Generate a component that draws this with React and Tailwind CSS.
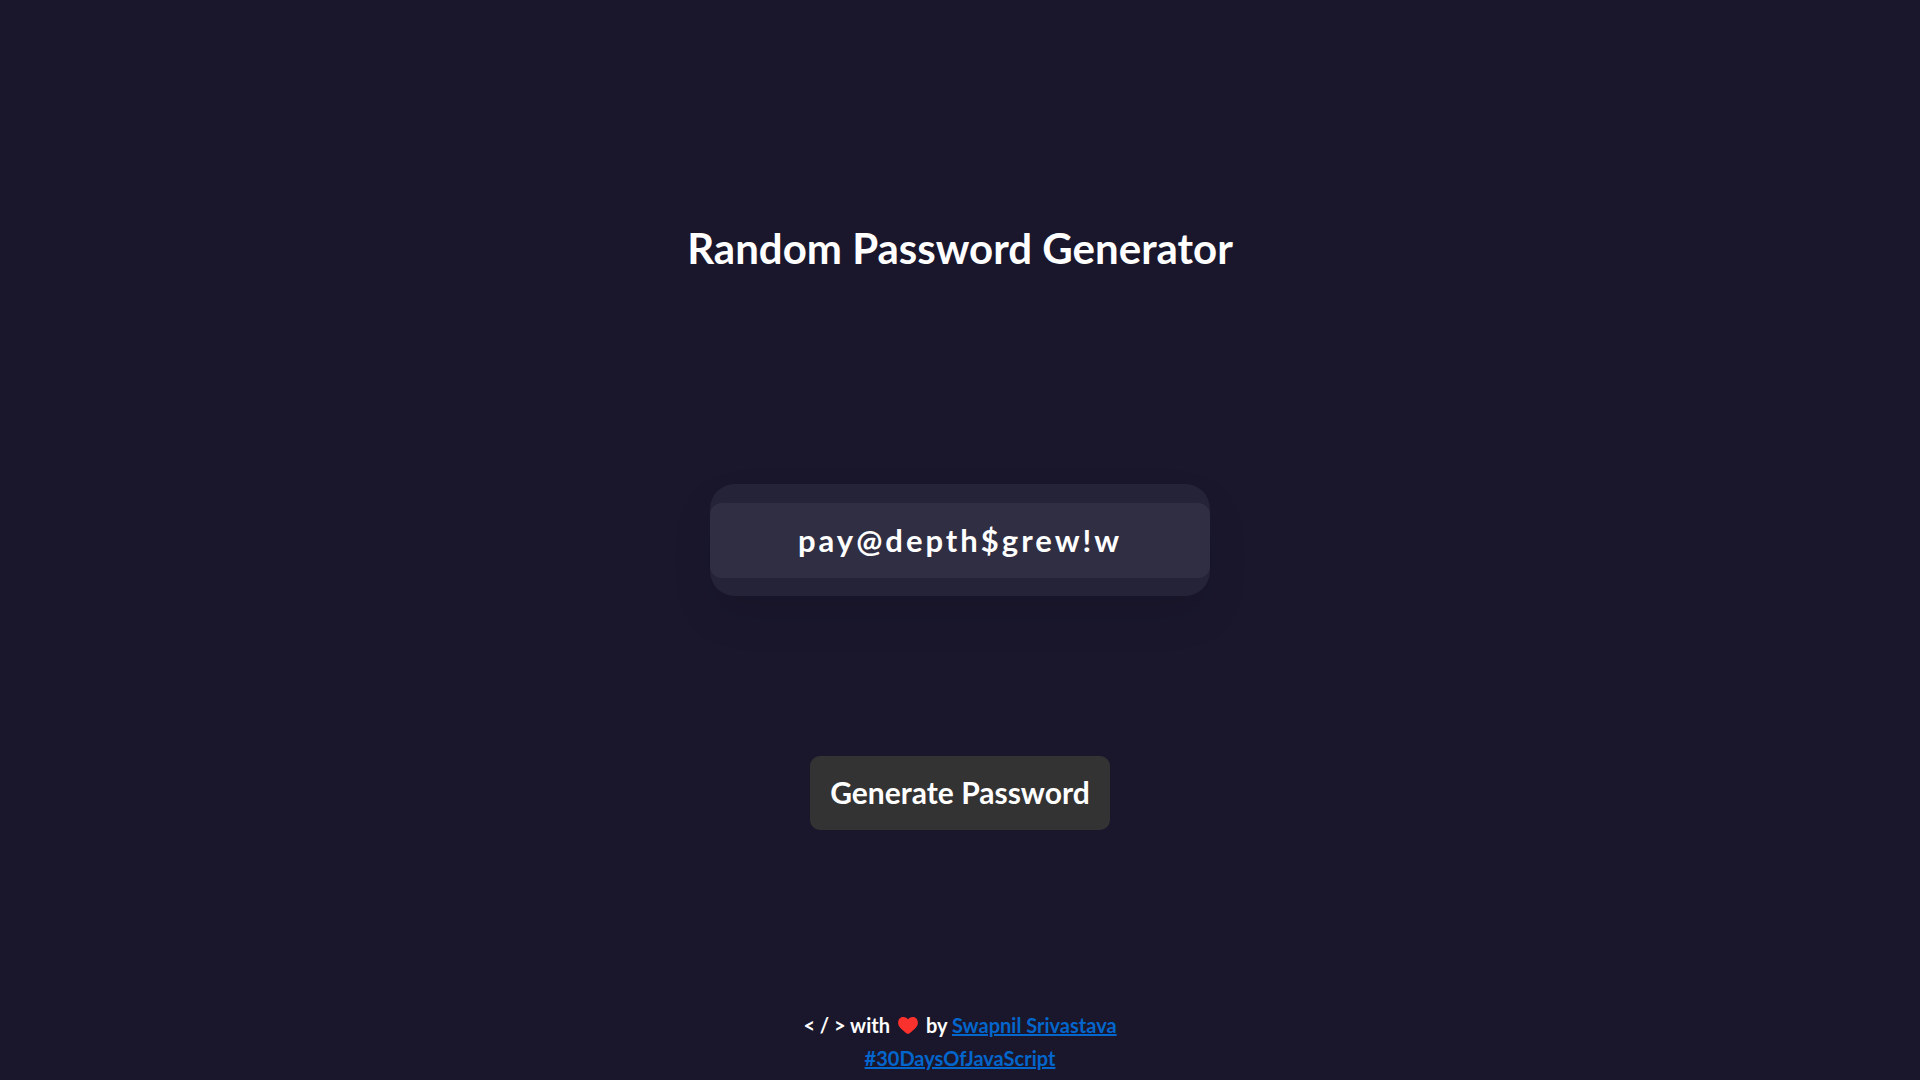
import { useState } from "react";

const words = ["depth", "grew", "pay", "lamp", "river", "stone", "cloud", "maple"];
const symbols = ["@", "$", "!", "#", "&"];
const pick = (list) => list[Math.floor(Math.random() * list.length)];

function createPassword() {
  return (pick(words) + pick(symbols) + pick(words) + pick(symbols) + pick(words)).slice(0, 16);
}

function Heart() {
  return (
    <svg viewBox="0 0 20 17" className="mx-2 h-[17px] w-5" role="img" aria-label="love">
      <path
        fill="#fa312d"
        d="M10 17C9.300 17 1.900 11.400.5 7.900-.7 4.200 1.200.1 5.100.1 7.600.1 9.200 1.300 10 2.600 10.800 1.300 12.400.1 14.900.1 18.800.1 20.700 4.200 19.500 7.900 18.100 11.400 10.700 17 10 17Z"
      />
    </svg>
  );
}

export default function App() {
  const [password, setPassword] = useState("pay@depth$grew!w");

  return (
    <div className="flex min-h-screen flex-col items-center bg-[#1a172d] font-['Lato',sans-serif] font-bold text-white">
      <main className="flex w-full flex-1 flex-col items-center px-4 pt-[216px]">
        <h1 className="text-center text-[42px] leading-[64px] font-bold">Random Password Generator</h1>
        <div className="mt-[204px] w-full max-w-[500px] rounded-[25px] bg-white/5 pt-[19px] pb-[18px] shadow-[0_20px_40px_rgba(0,0,0,0.1)]">
          <input
            type="text"
            readOnly
            aria-label="Generated password"
            value={password}
            className="block h-[75px] w-full rounded-xl bg-white/5 pb-0.5 text-center text-[31px] tracking-[3px] outline-none"
          />
        </div>
        <button
          type="button"
          onClick={() => setPassword(createPassword())}
          className="mt-40 h-[74px] w-[300px] cursor-pointer rounded-[10px] bg-[#333333] pb-0.5 text-[30px] whitespace-nowrap"
        >
          Generate Password
        </button>
      </main>
      <footer className="flex flex-col items-center pb-[5px] text-xl leading-[33px]">
        <p className="flex items-center">
          <span>&lt; / &gt; with</span>
          <Heart />
          <span>
            by{" "}
            <a href="#author" className="text-[#0366cc] underline">
              Swapnil Srivastava
            </a>
          </span>
        </p>
        <a href="#challenge" className="text-[#0366cc] underline">
          #30DaysOfJavaScript
        </a>
      </footer>
    </div>
  );
}
